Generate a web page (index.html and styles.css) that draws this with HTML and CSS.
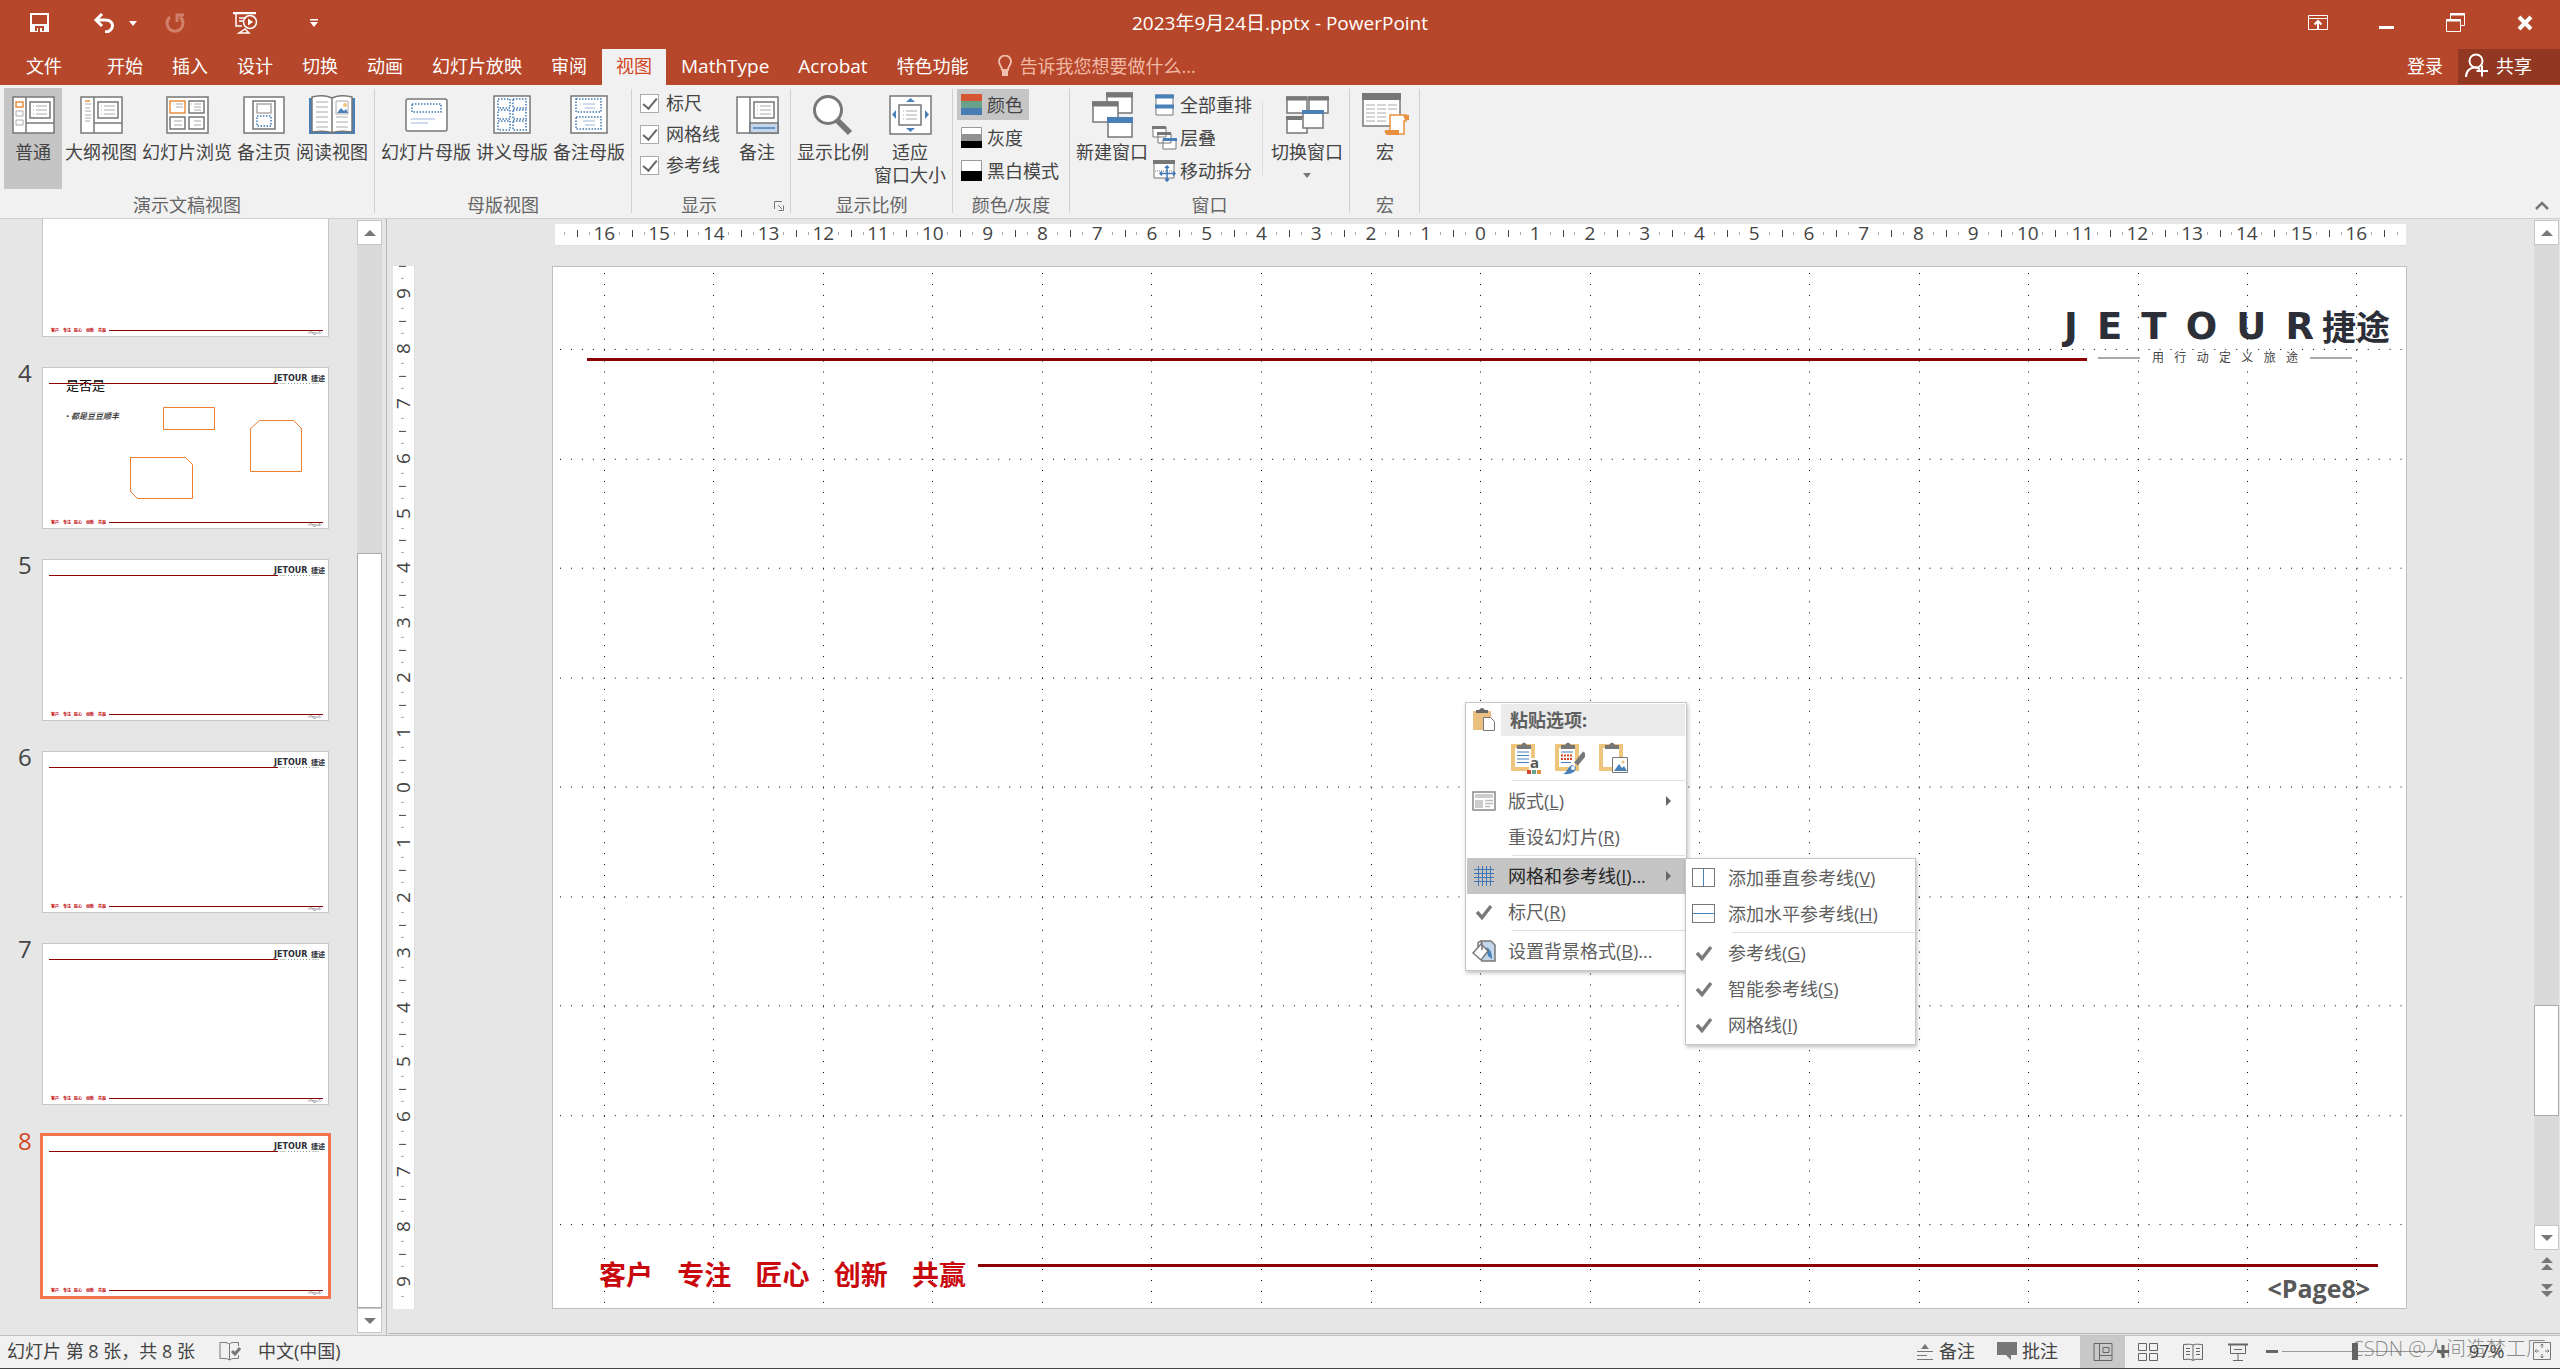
FILE: index.html
```html
<!DOCTYPE html>
<html lang="zh-CN">
<head>
<meta charset="utf-8">
<title>2023年9月24日.pptx - PowerPoint</title>
<link rel="stylesheet" href="styles.css">
</head>
<body>
<svg class="defs" aria-hidden="true">
  <symbol id="mini" viewBox="0 0 287 162">
    <path d="M7 16.5H236M67 155.5H281" stroke="#8b0000" stroke-width="1.2"/>
    <path d="M238 16.500h6M270 16.500h7" stroke="#ccc"/>
    <path d="M246 16.500h22" stroke="#999" stroke-dasharray="1 2"/>
  </symbol>
  <symbol id="check" viewBox="0 0 24 24"><path d="M5 12l5 5.500L19 6" fill="none" stroke="#7a7a7a" stroke-width="3.400"/></symbol>
  <symbol id="up" viewBox="0 0 12 8"><path d="M0 7L6 1l6 6z" fill="#777"/></symbol>
  <symbol id="down" viewBox="0 0 12 8"><path d="M0 1l6 6 6-6z" fill="#777"/></symbol>
  <symbol id="right" viewBox="0 0 6 12"><path d="M0 1v10l5-5z" fill="#666"/></symbol>
</svg>

<div class="app">
  <header class="top">
    <div class="titlebar">
      <div class="qat">
        <button class="q-save" aria-label="保存"><svg width="20" height="20" fill="none" stroke="#fff" stroke-width="2"><path d="M1 1h17v17H1z"/><path d="M1 11h17v7H1z" fill="#fff" stroke="none"/><path d="M6 18v-4h7v4" stroke="#b7472a"/><path d="M9 15v4" stroke="#b7472a"/></svg></button>
        <button class="q-undo" aria-label="撤消"><svg width="22" height="20" fill="none" stroke="#fff" stroke-width="3"><path d="M9 1L3 7l6 6M3 7h9c11 0 9 12 0 12"/></svg></button>
        <button class="q-drop" aria-label="撤消列表"><svg width="8" height="5"><path d="M0 0h8L4 5z" fill="#fff"/></svg></button>
        <button class="q-redo" aria-label="重复"><svg width="20" height="20" fill="none" stroke="#d0806b" stroke-width="3"><path d="M5 4a8 8 0 1 0 10 0M19 2h-7v7"/></svg></button>
        <button class="q-show" aria-label="从头开始"><svg width="25" height="22" fill="none" stroke="#fff" stroke-width="1.500"><path d="M0 1h23" stroke-width="2.500"/><path d="M3 2v12h6M6 6h7M6 9h4M12 17l-6 4h10z"/><circle cx="17" cy="10" r="6.500"/><path d="M15 6.500l5 3.500-5 3.500z" fill="#fff" stroke="none"/></svg></button>
        <button class="q-more" aria-label="自定义快速访问工具栏"><svg width="8" height="8"><path d="M0 0h8v1.500H0zM0 3h8L4 8z" fill="#fff"/></svg></button>
      </div>
      <h1>2023年9月24日.pptx - PowerPoint</h1>
      <div class="winctl">
        <button aria-label="功能区显示选项"><svg width="20" height="16" fill="none" stroke="#fff"><path d="M.5.500h19v14H.5zM.5 3.500h19"/><path d="M10 14V6M6.500 9.500L10 6l3.500 3.500" stroke-width="2"/></svg></button>
        <button aria-label="最小化"><svg width="16" height="16"><path d="M0 11h15v3H0z" fill="#fff"/></svg></button>
        <button aria-label="还原"><svg width="20" height="20" fill="none" stroke="#fff"><path d="M4.500 6V.5h14v12H15M.5 6.500h14v12H.5z"/><path d="M4 1.500h15M0 7.500h15" stroke-width="2"/></svg></button>
        <button aria-label="关闭"><svg width="16" height="16"><path d="M2 2l12 12M14 2L2 14" stroke="#fff" stroke-width="4"/></svg></button>
      </div>
    </div>
    <nav class="tabs">
      <button class="file">文件</button>
      <button>开始</button><button>插入</button><button>设计</button><button>切换</button><button>动画</button><button>幻灯片放映</button><button>审阅</button><button class="on">视图</button><button class="latin-tab">MathType</button><button class="latin-tab">Acrobat</button><button>特色功能</button>
      <label class="tell"><svg width="14" height="22" fill="none" stroke="#f0bfae" stroke-width="1.800"><path d="M4 15c0-4-3-5-3-8.500a6 6 0 0 1 12 0C13 10 10 11 10 15z"/><path d="M4 16h6v5H4z" fill="#f0bfae" stroke="none"/></svg><input type="text" placeholder="告诉我您想要做什么..." aria-label="告诉我您想要做什么"></label>
      <a class="login" href="#">登录</a>
      <button class="share"><svg width="24" height="25" fill="none" stroke="#fff" stroke-width="2"><circle cx="11" cy="8" r="6.500"/><path d="M1 24c0-6 4-9.500 9-9.500 3 0 4 1 5 2M17 12.500v11M11.500 18H23"/></svg>共享</button>
    </nav>
  </header>

  <section class="ribbon">
    <div class="group">
      <div class="row">
        <button class="big on"><span class="ic"><svg width="43" height="38" fill="#fff" stroke="#777"><path d="M1 1h41v36H1z" stroke-width="1.500"/><path d="M14 1v36M14 27h28M18 6h20v16H18z" stroke-width="1.500"/><path d="M4 6h7v5H4z" stroke="#e8903f" stroke-width="1.500"/><path d="M4 15h7v5H4zM4 24h7v5H4zM24 10h11M24 14h11M24 18h11M21 10h1M21 14h1M21 18h1" stroke="#aaa"/></svg></span>普通</button>
        <button class="big"><span class="ic"><svg width="43" height="38" fill="#fff" stroke="#777" stroke-width="1.500"><path d="M1 1h41v36H1zM14 1v36M14 27h28M18 6h20v16H18z"/><path d="M5 5h5" stroke="#e8903f"/><path d="M5 8h6M5 12h5M5 15h6M5 19h6M5 22h6M5 25h5M24 10h11M24 14h11M24 18h11M21 10h1M21 14h1M21 18h1" stroke="#aaa" stroke-width="1"/></svg></span>大纲视图</button>
        <button class="big"><span class="ic"><svg width="43" height="38" fill="#fff" stroke="#777" stroke-width="1.500"><path d="M1 1h41v36H1zM23 5h15v12H23zM4 21h15v12H4zM23 21h15v12H23z"/><path d="M4 5h15v12H4z" stroke="#e8903f"/><path d="M10 8h7M10 11h7M28 8h7M28 11h7M28 14h7M8 25h8M8 29h8M28 25h7M28 29h7M7 8h1M25 8h1" stroke="#aaa" stroke-width="1"/></svg></span>幻灯片浏览</button>
        <button class="big"><span class="ic"><svg width="42" height="38" fill="#fff" stroke="#777" stroke-width="1.500"><path d="M1 1h40v36H1zM10 5h22v28H10z"/><path d="M14 8h14v9H14z" stroke="#aaa"/><path d="M14 20h14v10H14z" stroke="#3f78b5" stroke-dasharray="1.500 1.500"/></svg></span>备注页</button>
        <button class="big"><span class="ic"><svg width="46" height="40" fill="#fff" stroke="#777"><path d="M0 3h46v36H0z" fill="#4a80b8" stroke="none"/><path d="M3 2c8-2 16-1 20 1 4-2 12-3 20-1v35c-8-1-16-1-20 1-4-2-12-2-20-1zM23 3v35" stroke-width="1.500"/><path d="M7 7h12M7 12h12M7 17h12M7 22h12M7 27h12M7 32h12M27 22h12M27 27h12M27 32h12" stroke="#aaa"/><path d="M27 6h12v13H27z" stroke="#aaa"/><path d="M28 18l4-5 3 3 2-2 2 4z" fill="#4a80b8" stroke="none"/><circle cx="36" cy="10" r="2" fill="#f3c57c" stroke="none"/></svg></span>阅读视图</button>
      </div>
      <h2>演示文稿视图</h2>
    </div>
    <div class="group">
      <div class="row">
        <button class="big"><span class="ic"><svg width="43" height="34" fill="#fff" stroke="#777" stroke-width="1.500"><rect x="1" y="1" width="41" height="32" rx="2"/><path d="M7 6h29v8H7z" stroke="#3f78b5" stroke-dasharray="1.500 1.500"/><path d="M6 21h24M6 25h17" stroke="#9db8dc" stroke-width="1"/></svg></span>幻灯片母版</button>
        <button class="big"><span class="ic"><svg width="38" height="39" fill="#fff" stroke="#777" stroke-width="1.500"><path d="M1 1h36v37H1z"/><path d="M5 4h12v9H5zM20 4h13v9H20zM5 15h12v9H5zM20 15h13v9H20zM5 26h12v9H5zM20 26h13v9H20z" stroke="#3f78b5" stroke-dasharray="1.500 1.500"/></svg></span>讲义母版</button>
        <button class="big"><span class="ic"><svg width="38" height="39" fill="#fff" stroke="#777" stroke-width="1.500"><path d="M1 1h36v37H1z"/><path d="M6 4h25v13H6zM6 22h25v12H6z" stroke="#3f78b5" stroke-dasharray="1.500 1.500"/><path d="M13 9h12M15 13h10M13 26h12M15 30h10M10 9h1" stroke="#9db8dc" stroke-width="1"/></svg></span>备注母版</button>
      </div>
      <h2>母版视图</h2>
    </div>
    <div class="group show">
      <div class="row">
        <div class="checks">
          <label><input type="checkbox" checked>标尺</label>
          <label><input type="checkbox" checked>网格线</label>
          <label><input type="checkbox" checked>参考线</label>
        </div>
        <button class="big"><span class="ic"><svg width="43" height="38" fill="#fff" stroke="#777" stroke-width="1.500"><path d="M1 1h41v36H1zM14 1v36M18 6h20v16H18z"/><path d="M14 27h28v10H14z" fill="#c3d6ea"/><path d="M17 32h22" stroke="#4a80b8"/><path d="M24 10h11M24 14h11M24 18h11M21 10h1M21 14h1M21 18h1" stroke="#aaa" stroke-width="1"/></svg></span>备注</button>
      </div>
      <h2>显示</h2>
      <button class="launch" aria-label="网格设置"><svg width="10" height="10" fill="none" stroke="#777"><path d="M.5 8V.5H8M4 4l4 4M9.500 4.500v5h-5"/></svg></button>
    </div>
    <div class="group">
      <div class="row">
        <button class="big"><span class="ic"><svg width="42" height="42" fill="#fff" stroke="#777"><path d="M24 25l14 14" stroke-width="6"/><circle cx="16" cy="16" r="13.500" stroke-width="3"/></svg></span>显示比例</button>
        <button class="big"><span class="ic"><svg width="43" height="40" fill="#fff" stroke="#777" stroke-width="1.500"><path d="M1 1h41v38H1zM10 10h22v20H10z"/><path d="M17 7h9l-4.500-4zM17 33h9l-4.500 4zM7 15v9l-4-4.500zM36 15v9l4-4.500z" fill="#4a80b8" stroke="none"/><path d="M17 16h11M17 20h11M17 24h11M14 16h1M14 20h1M14 24h1" stroke="#aaa" stroke-width="1"/></svg></span>适应<br>窗口大小</button>
      </div>
      <h2>显示比例</h2>
    </div>
    <div class="group">
      <div class="row">
        <div class="smalls">
          <button class="on"><svg width="21" height="21"><path d="M0 0h21v7H0z" fill="#d65532"/><path d="M0 7h21v7H0z" fill="#69a18b"/><path d="M0 14h21v7H0z" fill="#4a7cb4"/></svg>颜色</button>
          <button><svg width="21" height="21"><path d="M.5.500h20v20H.5z" fill="#fff" stroke="#999"/><path d="M0 7h21v7H0z" fill="#929292"/><path d="M0 14h21v7H0z"/></svg>灰度</button>
          <button><svg width="21" height="21"><path d="M.5.500h20v20H.5z" fill="#fff" stroke="#999"/><path d="M0 11h21v10H0z"/></svg>黑白模式</button>
        </div>
      </div>
      <h2>颜色/灰度</h2>
    </div>
    <div class="group">
      <div class="row">
        <button class="big"><span class="ic"><svg width="41" height="46" fill="#fff" stroke="#777" stroke-width="1.500"><path d="M15 1h25v20H15z"/><path d="M14 3h27" stroke-width="5"/><path d="M1 10h25v20H1z"/><path d="M0 12h26" stroke-width="5"/><path d="M16 26h24v19H16z"/><path d="M15 28h26" stroke="#4a80b8" stroke-width="6"/></svg></span>新建窗口</button>
        <div class="smalls tight">
          <button><svg width="26" height="22" fill="#fff" stroke="#777"><path d="M4 1h17v20H4z"/><path d="M3 2.500h19M3 12.500h19" stroke="#4a80b8" stroke-width="4"/></svg>全部重排</button>
          <button><svg width="26" height="24" fill="#fff" stroke="#777"><path d="M1 1h13v10H1zM6 7h13v10H6zM11 13h13v10H11z"/><path d="M0 1.500h14M5 7.500h14" stroke-width="3"/><path d="M11 13.500h14" stroke="#4a80b8" stroke-width="3"/></svg>层叠</button>
          <button><svg width="26" height="22" fill="#fff" stroke="#777"><path d="M2 1h20v17H2z"/><path d="M1 2h22" stroke-width="4"/><path d="M3 11h18" stroke-dasharray="1 1"/><path d="M15 6v15M8 13.500h15M13 8l2-2 2 2M13 19l2 2 2-2M10 11.500l-2 2 2 2M21 11.500l2 2-2 2" stroke="#3f78b5" stroke-width="1.500"/></svg>移动拆分</button>
        </div>
        <span class="vsep"></span>
        <button class="big"><span class="ic"><svg width="43" height="38" fill="#fff" stroke="#777" stroke-width="1.500"><path d="M1 1h20v16H1zM23 1h19v16H23zM1 21h20v16H1z"/><path d="M0 2.500h21M22 2.500h21M0 22h16" stroke-width="4"/><path d="M17 15h20v17H17z"/><path d="M16 16h22" stroke="#4a80b8" stroke-width="4"/></svg></span>切换窗口<svg class="arrow" width="8" height="5"><path d="M0 0h8L4 5z" fill="#777"/></svg></button>
      </div>
      <h2>窗口</h2>
    </div>
    <div class="group macro">
      <div class="row">
        <button class="big"><span class="ic"><svg width="47" height="43" fill="#fff" stroke="#777" stroke-width="1.500"><path d="M1 1h37v32H1z"/><path d="M0 3.500h39" stroke-width="7"/><path d="M4 12h9M15 12h9M26 12h9M4 16h9M15 16h9M26 16h9M4 20h9M15 20h9M4 24h9M15 24h9M4 28h9M15 28h9" stroke="#aaa" stroke-width="1"/><path d="M28 37V22h16v6h-2v13H27z" stroke="#e8903f"/><path d="M23 37h14v5H25q-3-2-2-5zM41 22h6v5h-4z" fill="#e8903f" stroke="none"/></svg></span>宏</button>
      </div>
      <h2>宏</h2>
    </div>
    <button class="collapse" aria-label="折叠功能区"><svg width="14" height="10"><path d="M1 8l6-6 6 6" fill="none" stroke="#777" stroke-width="2.500"/></svg></button>
  </section>

  <main class="main">
    <aside class="panel">
      <ol class="thumbs">
        <li><svg class="thumb" viewBox="0 0 287 162"><use href="#mini"/><g class="tiny"><text x="9" y="157">客户</text><text x="21" y="157">专注</text><text x="32" y="157">匠心</text><text x="44" y="157">创新</text><text x="56" y="157">共赢</text></g><text class="num" x="265" y="159">&lt;Page3&gt;</text></svg></li>
        <li><span>4</span><svg class="thumb" viewBox="0 0 287 162"><text x="24" y="23" font-size="13" fill="#000">是否是</text><text x="24" y="52" font-size="8" font-weight="500" font-style="italic" fill="#222">• 都是豆豆顺丰</text><use href="#mini"/><g fill="none" stroke="#ed7d31"><path d="M121.500 40.500h51v22h-51zM88.500 90.500h55l7 7v34h-55l-7-7zM208.500 61.500l9-8h34l8 8v43h-51z"/></g><text class="brand" x="232" y="14">JETOUR</text><text class="brand-cn" x="269" y="14">捷途</text><g class="tiny"><text x="9" y="157">客户</text><text x="21" y="157">专注</text><text x="32" y="157">匠心</text><text x="44" y="157">创新</text><text x="56" y="157">共赢</text></g><text class="num" x="265" y="159">&lt;Page4&gt;</text></svg></li>
        <li><span>5</span><svg class="thumb" viewBox="0 0 287 162"><use href="#mini"/><text class="brand" x="232" y="14">JETOUR</text><text class="brand-cn" x="269" y="14">捷途</text><g class="tiny"><text x="9" y="157">客户</text><text x="21" y="157">专注</text><text x="32" y="157">匠心</text><text x="44" y="157">创新</text><text x="56" y="157">共赢</text></g><text class="num" x="265" y="159">&lt;Page5&gt;</text></svg></li>
        <li><span>6</span><svg class="thumb" viewBox="0 0 287 162"><use href="#mini"/><text class="brand" x="232" y="14">JETOUR</text><text class="brand-cn" x="269" y="14">捷途</text><g class="tiny"><text x="9" y="157">客户</text><text x="21" y="157">专注</text><text x="32" y="157">匠心</text><text x="44" y="157">创新</text><text x="56" y="157">共赢</text></g><text class="num" x="265" y="159">&lt;Page6&gt;</text></svg></li>
        <li><span>7</span><svg class="thumb" viewBox="0 0 287 162"><use href="#mini"/><text class="brand" x="232" y="14">JETOUR</text><text class="brand-cn" x="269" y="14">捷途</text><g class="tiny"><text x="9" y="157">客户</text><text x="21" y="157">专注</text><text x="32" y="157">匠心</text><text x="44" y="157">创新</text><text x="56" y="157">共赢</text></g><text class="num" x="265" y="159">&lt;Page7&gt;</text></svg></li>
        <li class="on"><span>8</span><svg class="thumb" viewBox="0 0 287 162"><use href="#mini"/><text class="brand" x="232" y="14">JETOUR</text><text class="brand-cn" x="269" y="14">捷途</text><g class="tiny"><text x="9" y="157">客户</text><text x="21" y="157">专注</text><text x="32" y="157">匠心</text><text x="44" y="157">创新</text><text x="56" y="157">共赢</text></g><text class="num" x="265" y="159">&lt;Page8&gt;</text></svg></li>
      </ol>
      <div class="scroll left">
        <button aria-label="向上"><svg width="12" height="8"><use href="#up"/></svg></button>
        <div class="track"><i class="gap"></i><i class="bar"></i></div>
        <button aria-label="向下"><svg width="12" height="8"><use href="#down"/></svg></button>
      </div>
    </aside>

    <section class="work">
      <ol class="hruler"><li>16</li><li>15</li><li>14</li><li>13</li><li>12</li><li>11</li><li>10</li><li>9</li><li>8</li><li>7</li><li>6</li><li>5</li><li>4</li><li>3</li><li>2</li><li>1</li><li>0</li><li>1</li><li>2</li><li>3</li><li>4</li><li>5</li><li>6</li><li>7</li><li>8</li><li>9</li><li>10</li><li>11</li><li>12</li><li>13</li><li>14</li><li>15</li><li>16</li></ol>
      <ol class="vruler"><li>9</li><li>8</li><li>7</li><li>6</li><li>5</li><li>4</li><li>3</li><li>2</li><li>1</li><li>0</li><li>1</li><li>2</li><li>3</li><li>4</li><li>5</li><li>6</li><li>7</li><li>8</li><li>9</li></ol>
      <article class="slide">
        <div class="logo">
          <span class="latin"><span>J</span><span>E</span><span>T</span><span>O</span><span>U</span><span>R</span></span>
          <span class="han">捷途</span>
        </div>
        <div class="headline">
          <hr class="rule">
          <div class="slogan"><i></i><p>用 行 动 定 义 旅 途</p><i></i></div>
        </div>
        <footer class="foot">
          <p class="words"><span>客户</span> <span>专注</span> <span>匠心</span> <span>创新</span> <span>共赢</span></p>
          <div class="footright"><hr class="rule"><p class="page">&lt;Page8&gt;</p></div>
        </footer>
        <svg class="grid" viewBox="0 0 1855 1044" preserveAspectRatio="none" shape-rendering="crispEdges" fill="none" stroke="#000">
          <path stroke-dasharray="1 9.956" d="M52.500 7V1040M161.500 7V1040M271.500 7V1040M380.500 7V1040M490.500 7V1040M599.500 7V1040M709.500 7V1040M819.500 7V1040M928.500 7V1040M1038.500 7V1040M1147.500 7V1040M1257.500 7V1040M1367.500 7V1040M1476.500 7V1040M1586.500 7V1040M1695.500 7V1040M1804.500 7V1040"/>
          <path stroke-dasharray="1 9.956" d="M8 83.500H1852M8 193.500H1852M8 302.500H1852M8 412.500H1852M8 521.500H1852M8 631.500H1852M8 740.500H1852M8 850.500H1852M8 959.500H1852"/>
        </svg>
      </article>
      <div class="scroll right">
        <button aria-label="向上"><svg width="12" height="8"><use href="#up"/></svg></button>
        <div class="track"><i class="gap"></i><i class="bar"></i><i class="rest"></i></div>
        <button aria-label="向下"><svg width="12" height="8"><use href="#down"/></svg></button>
        <button class="jump" aria-label="上一张幻灯片"><svg width="12" height="14"><path d="M0 6h12L6 0zM0 13h12L6 7z" fill="#777"/></svg></button>
        <button class="jump" aria-label="下一张幻灯片"><svg width="12" height="14"><path d="M0 0h12L6 6zM0 7h12l-6 6z" fill="#777"/></svg></button>
      </div>
      <div class="baseline"></div>
    </section>
  </main>

  <footer class="status">
    <span class="count">幻灯片 第 8 张，共 8 张</span>
    <button aria-label="拼写检查"><svg width="22" height="20" fill="none" stroke="#777"><path d="M10.500 3C8 1 4 1.500 1 1.500v16c3 0 7-.5 9.500 1.500V3C12 1 16 1.500 19.500 1.500V5M10.500 19c2-2 6-1.500 9-1.500V14"/><path d="M13 10l3 3 5-6" stroke-width="3"/></svg></button>
    <span class="lang">中文(中国)</span>
    <button class="s-note"><svg width="18" height="18"><path d="M5 7l4-5 4 5z" fill="#777"/><path d="M1 9.500h16M1 13.500h10M1 17.500h16" stroke="#777"/></svg>备注</button>
    <button class="s-comment"><svg width="20" height="20"><path d="M0 1h20v13h-6v5l-5-5H0z" fill="#777"/></svg>批注</button>
    <div class="views">
      <button class="on" aria-label="普通"><svg width="20" height="19" fill="none" stroke="#666"><path d="M1 .5h18v17H1zM6.500.500v17M6.500 12.500H19M10 4.500h6v5h-6z"/></svg></button>
      <button aria-label="幻灯片浏览"><svg width="20" height="19" fill="none" stroke="#666"><path d="M.5.500h8v7h-8zM11.500.500h8v7h-8zM.5 10.500h8v7h-8zM11.500 10.500h8v7h-8z"/></svg></button>
      <button aria-label="阅读视图"><svg width="20" height="19" fill="none" stroke="#666"><path d="M10 2C7 .5 4 1.500.500 1.500v15c3 0 7-1 9.500 1 2.500-2 6-1 9.500-1v-15C16 1.500 13 .5 10 2v15M3 5.500h4M3 8.500h4M3 11.500h4M13 5.500h4M13 8.500h4M13 11.500h4"/></svg></button>
      <button aria-label="幻灯片放映"><svg width="20" height="19" fill="none" stroke="#666"><path d="M0 1.500h20" stroke-width="2"/><path d="M2.500 2v8.500h15V2M6 6.500h8M10 11v7M5 17.500h10"/></svg></button>
    </div>
    <button class="z-out" aria-label="缩小"><svg width="12" height="18"><path d="M0 8h12v3H0z" fill="#666"/></svg></button>
    <input class="zoom" type="range" min="10" max="200" value="103" aria-label="显示比例">
    <button class="z-in" aria-label="放大"><svg width="12" height="18"><path d="M0 9.500h12M6 3v13" stroke="#666" stroke-width="3"/></svg></button>
    <span class="pct">97%</span>
    <button aria-label="使幻灯片适应当前窗口"><svg width="18" height="18" fill="none" stroke="#777"><path d="M.5.500h17v17H.5zM9 2v4M9 12v4M2 9h4M12 9h4M7.500 3.500L9 2l1.500 1.500M7.500 14.500L9 16l1.500-1.500M3.500 7.500L2 9l1.500 1.500M14.500 7.500L16 9l-1.500 1.500"/></svg></button>
  </footer>

  <ul class="menu ctx">
    <li class="head"><span class="mi"><svg width="22" height="24"><path d="M0 3h18v19H0z" fill="#e9c07f"/><path d="M3 5V2h3q3-4 6 0h3v3z" fill="#666"/><path d="M10.500 9.500h7l4 4v9h-11z" fill="#fff" stroke="#777"/></svg></span><b>粘贴选项:</b></li>
    <li class="paste">
      <button aria-label="使用目标主题"><svg width="30" height="34"><path d="M2 5h20v23H2z" fill="#fff" stroke="#edc57c" stroke-width="4"/><path d="M6 8V4h4q3-5 6 0h4v4z" fill="#777"/><path d="M6 11h12M6 14.500h12M6 18h12M6 21.500h12" stroke="#4a80b8"/><path d="M18 17h12v16H18z" fill="#fff"/><path d="M16 29h4v4h-4z" fill="#d24726"/><path d="M21 29h4v4h-4z" fill="#69a18b"/><path d="M26 29h4v4h-4z" fill="#e8903f"/><text x="19" y="27" font-size="15" font-weight="700" fill="#555">a</text></svg></button>
      <button aria-label="保留源格式"><svg width="30" height="34"><path d="M2 5h20v23H2z" fill="#fff" stroke="#edc57c" stroke-width="4"/><path d="M6 8V4h4q3-5 6 0h4v4z" fill="#777"/><path d="M6 11h12M6 21.500h10" stroke="#4a80b8"/><path d="M6 14.500h12M6 18h12" stroke="#d24726" stroke-width="2" stroke-dasharray="2 1"/><path d="M30 12l-9 11" stroke="#777" stroke-width="5"/><path d="M8 33c4-1 5-8 9-9l4 2c0 4-3 8-13 7z" fill="#4a80b8"/><circle cx="18" cy="27" r="2" fill="#fff"/></svg></button>
      <button aria-label="图片"><svg width="30" height="34"><path d="M2 5h20v23H2z" fill="#fff" stroke="#edc57c" stroke-width="4"/><path d="M6 8V4h4q3-5 6 0h4v4z" fill="#777"/><path d="M13.500 16.500h15v15h-15z" fill="#fff" stroke="#777"/><path d="M15 30l5-7 3 4 2-2 3 5z" fill="#4a80b8"/><circle cx="24" cy="21" r="1.500" fill="#e9c07f"/></svg></button>
    </li>
    <li class="sep"></li>
    <li class="item"><span class="mi"><svg width="24" height="20" fill="#fff" stroke="#888" stroke-width="1.500"><path d="M1 1h22v18H1z"/><path d="M3 3h18v4H3zM3 9h8v8H3z" fill="#ccc" stroke="none"/><path d="M13 9.500h8M13 12.500h8M13 15.500h5" stroke="#bbb"/></svg></span>版式(<u>L</u>)<svg class="sub" width="6" height="12"><use href="#right"/></svg></li>
    <li class="item"><span class="mi"></span>重设幻灯片(<u>R</u>)</li>
    <li class="sep"></li>
    <li class="item on"><span class="mi"><svg width="20" height="20" stroke="#3f78b5"><path d="M4.500 0v20M8.500 0v20M12.500 0v20M16.500 0v20M0 3.500h20M0 7.500h20M0 11.500h20M0 15.500h20"/></svg></span>网格和参考线(<u>I</u>)...<svg class="sub" width="6" height="12"><use href="#right"/></svg></li>
    <li class="item"><span class="mi"><svg width="24" height="24"><use href="#check"/></svg></span>标尺(<u>R</u>)</li>
    <li class="sep"></li>
    <li class="item"><span class="mi"><svg width="24" height="24" fill="#fff" stroke="#777"><path d="M8 2h11l4 4v16H9" fill="#c3d6ea" stroke-width="1.500"/><path d="M14 8q6 2 6 12l-4-3z" fill="#4a80b8" stroke="none"/><path d="M1 14L9 5l7 7-7 9zM6 8V4q2-3 4 0v7" stroke-width="1.500"/></svg></span>设置背景格式(<u>B</u>)...</li>
  </ul>
  <ul class="menu submenu">
    <li class="item"><span class="mi"><svg width="24" height="20" fill="none" stroke="#777" shape-rendering="crispEdges"><path d="M.5.500h22v18H.5z"/><path d="M11.500 1v17" stroke="#4a80b8"/></svg></span>添加垂直参考线(<u>V</u>)</li>
    <li class="item"><span class="mi"><svg width="24" height="20" fill="none" stroke="#777" shape-rendering="crispEdges"><path d="M.5.500h22v18H.5z"/><path d="M1 9.500h21" stroke="#4a80b8"/></svg></span>添加水平参考线(<u>H</u>)</li>
    <li class="sep"></li>
    <li class="item"><span class="mi"><svg width="24" height="24"><use href="#check"/></svg></span>参考线(<u>G</u>)</li>
    <li class="item"><span class="mi"><svg width="24" height="24"><use href="#check"/></svg></span>智能参考线(<u>S</u>)</li>
    <li class="item"><span class="mi"><svg width="24" height="24"><use href="#check"/></svg></span>网格线(<u>I</u>)</li>
  </ul>
  <div class="watermark">CSDN @人间造梦工厂</div>
</div>
</body>
</html>
```
FILE: styles.css
```css
* { box-sizing: border-box; }
body, h1, h2, p, ul, ol, hr { margin: 0; padding: 0; border: 0; }
ul, ol { list-style: none; }
body {
  font: 18px/24px "Open Sans", "Noto Sans CJK SC", sans-serif;
  color: #444;
  background: #e6e6e6;
}
button, input { font: inherit; color: inherit; border: 0; background: none; padding: 0; margin: 0; }
button { display: flex; align-items: center; justify-content: center; white-space: nowrap; }
svg { display: block; flex: none; }
.defs { position: absolute; width: 0; height: 0; }
.app { position: relative; min-height: 100vh; display: flex; flex-direction: column; overflow: hidden; }

/* title bar and tabs */
.top { background: #b7472a; color: #fff; }
.titlebar { height: 49px; display: grid; grid-template-columns: 1fr auto 1fr; align-items: center; padding-bottom: 3px; }
.titlebar h1 { font-size: 19px; font-weight: 400; line-height: 24px; }
.qat { display: flex; align-items: center; padding-left: 30px; }
.q-undo { margin-left: 43px; }
.q-drop { margin-left: 14px; }
.q-redo { margin-left: 28px; }
.q-show { margin-left: 48px; }
.q-more { margin-left: 52px; }
.winctl { display: flex; justify-content: flex-end; gap: 51px; padding-right: 27px; }
.tabs { display: flex; height: 36px; gap: 1px; }
.tabs button { padding: 0 14px 3px; }
.tabs .latin-tab { font-size: 19px; }
.tabs .file { margin: 0 16px 0 12px; }
.tabs .on { background: #f1f1f1; color: #d24726; }
.tell { display: flex; align-items: center; gap: 8px; margin-left: 14px; flex: 1; padding-bottom: 2px; }
.tell input { width: 220px; }
.tell input::placeholder { color: #f0b9a6; opacity: 1; }
.login { color: #fff; text-decoration: none; line-height: 34px; margin-right: 14px; }
.tabs .share { background: #923822; padding: 0 28px 2px 7px; gap: 7px; margin-bottom: 1px; }

/* ribbon */
.ribbon { position: relative; display: flex; background: #f1f1f1; border-bottom: 1px solid #d0d0d0; padding-top: 3px; }
.group { position: relative; padding: 0 5px 1px 4px; background: linear-gradient(#d0d0d0, #d0d0d0) right 1px / 1px 124px no-repeat; }
.group h2 { font-size: 18px; font-weight: 400; line-height: 24px; text-align: center; color: #666; margin-top: 4px; }
.group.show h2 { padding-right: 24px; }
.row { display: flex; gap: 1px; height: 101px; }
.big { flex-direction: column; justify-content: flex-start; line-height: 23px; padding: 0 2px; min-width: 58px; }
.big.on, .smalls .on { background: #c5c5c5; }
.ic { height: 53px; display: flex; align-items: center; }
.arrow { margin-top: 9px; }
.checks { display: flex; flex-direction: column; gap: 7px; padding: 3px 7px 0 4px; }
.checks label { display: flex; align-items: center; gap: 7px; }
.checks input {
  appearance: none; width: 19px; height: 19px; border: 1px solid #ababab;
  background: #fff;
  display: grid; place-items: center;
}
.checks input:checked::after { content: ""; width: 6px; height: 12px; border: solid #666; border-width: 0 2px 2px 0; transform: rotate(40deg); margin-top: -3px; }
.launch { position: absolute; right: 7px; bottom: 7px; }
.smalls { display: flex; flex-direction: column; gap: 2px; padding-top: 1px; }
.smalls button { height: 31px; gap: 5px; padding: 0 6px 0 4px; align-self: flex-start; }
.smalls.tight button { gap: 2px; padding: 0 6px 0 1px; }
.vsep { width: 1px; background: #ddd; margin: 14px 5px 14px 3px; }
.group.macro { padding: 0 6px; }
.collapse { position: absolute; right: 11px; bottom: 7px; }

/* thumbnails */
.main { flex: 1; display: flex; min-height: 0; }
.panel { width: 387px; flex: none; display: flex; border-right: 1px solid #b5b5b5; padding-right: 4px; }
.thumbs { flex: 1; height: 0; min-height: 100%; overflow: hidden; display: flex; flex-direction: column; justify-content: flex-end; gap: 30px; padding: 0 28px 38px 0; }
.thumbs li { display: grid; grid-template-columns: 42px 1fr; align-items: start; }
.thumbs span { font-size: 24px; line-height: 24px; padding-left: 18px; margin-top: -6px; }
.thumb { grid-column: 2; width: 100%; background: #fff; outline: 1px solid #c6c6c6; outline-offset: -1px; }
.thumbs .on span { color: #d24726; }
.thumbs .on .thumb { outline: 3px solid #f3734f; }
.brand, .brand-cn { font: 700 8px "DejaVu Sans", sans-serif; fill: #2c2f38; }
.brand-cn { font: 700 7px "Noto Sans CJK SC", sans-serif; }
.tiny { font-size: 4px; font-weight: 700; fill: #c00000; }
.num { font-size: 4px; font-style: italic; fill: #555; }

/* scroll bars */
.scroll { width: 25px; display: flex; flex-direction: column; padding-top: 1px; }
.scroll button { height: 25px; background: #fff; border: 1px solid #c6c6c6; flex: none; }
.scroll .jump { background: none; border: 0; height: 27px; }
.track { flex: 1; background: #dadada; display: flex; flex-direction: column; }
.bar { background: #fff; border: 1px solid #ababab; }
.left { padding-bottom: 2px; }
.left .gap { flex: 309; }
.left .bar { flex: 755; }
.right .gap { flex: 762; }
.right .bar, .right .rest { flex: 109; }
.right { grid-area: 1 / 6 / 6 / 7; padding-bottom: 29px; }

/* slide canvas */
.work {
  flex: 1; display: grid;
  grid-template-columns: 6px 22px 137px 1fr 127px 25px 1px;
  grid-template-rows: 5px 22px 20px 1fr 24px 2px;
}
.hruler, .vruler { display: flex; background: #fff; border: 1px solid #ddd; border-width: 0 0 1px; font-size: 19px; line-height: 18px; }
.hruler li, .vruler li { flex: 1; display: flex; justify-content: center; background-repeat: no-repeat; }
.hruler { grid-area: 2 / 4; margin: 0 1px 0 3px; padding: 0 22px; position: relative; }
.hruler li {
  background-image: linear-gradient(#444, #444), linear-gradient(#aaa, #aaa), linear-gradient(#aaa, #aaa);
  background-size: 1px 7px, 1px 3px, 1px 3px;
  background-position: 0 6px, 22% 8px, 78% 8px;
}
.hruler::before, .hruler::after { content: ""; position: absolute; top: 8px; left: 9px; width: 1px; height: 3px; background: #aaa; }
.hruler::after { left: auto; right: 8px; height: 7px; top: 6px; width: 14px; background: linear-gradient(#444, #444) left / 1px 7px no-repeat, linear-gradient(#aaa, #aaa) right / 1px 3px no-repeat; }
.vruler { grid-area: 4 / 2; flex-direction: column; border-width: 0 1px 0 0; padding-right: 1px; }
.vruler li {
  writing-mode: vertical-rl; transform: rotate(180deg); align-items: center; line-height: 18px;
  background-image: linear-gradient(#444, #444), linear-gradient(#aaa, #aaa), linear-gradient(#aaa, #aaa);
  background-size: 7px 1px, 3px 1px, 3px 1px;
  background-position: 7px 100%, 9px 22%, 9px 78%;
}
.slide { grid-area: 4 / 4; background: #fff; border: 1px solid #c0c0c0; position: relative; display: flex; flex-direction: column; }
.grid { position: absolute; inset: -1px; width: calc(100% + 2px); height: calc(100% + 2px); }
.logo { display: flex; justify-content: flex-end; align-items: center; height: 36px; margin: 42px 16px 0; color: #2c2f38; }
.latin { display: flex; justify-content: space-between; width: 250px; font: 700 37px/36px "DejaVu Sans", sans-serif; }
.han { font-size: 34px; line-height: 36px; font-weight: 700; margin-left: 8px; }
.headline { display: flex; gap: 11px; padding: 0 54px 0 34px; align-items: center; }
.rule { flex: 1; height: 3px; background: #8b0000; margin-top: 3px; }
.slogan { width: 254px; display: flex; align-items: center; justify-content: space-between; }
.slogan i { width: 42px; height: 2px; background: #aaa; }
.slogan p { width: 146px; font-size: 12px; line-height: 26px; text-align-last: justify; }
.foot { margin-top: auto; display: flex; align-items: flex-start; gap: 12px; padding: 0 28px 6px 46px; }
.words { width: 367px; display: flex; justify-content: space-between; font-size: 27px; line-height: 36px; font-weight: 700; color: #c8080c; }
.footright { flex: 1; padding-top: 4px; }
.page { font-size: 25px; line-height: 28px; font-weight: 700; color: #595959; text-align: right; padding-right: 8px; margin-top: 7px; }
.baseline { grid-area: 6 / 1 / 7 / 8; border-top: 1px solid #b5b5b5; margin-left: 2px; }

/* status bar */
.status { height: 34px; display: flex; align-items: center; background: #f1f1f1; border-top: 1px solid #c0c0c0; border-bottom: 1px solid #444; padding: 0 9px 2px 7px; }
.count { width: 212px; white-space: nowrap; }
.lang { margin-left: 17px; margin-right: auto; }
.s-note, .s-comment { gap: 5px; margin-right: 22px; }
.views { display: flex; align-self: stretch; margin-bottom: -2px; }
.views button { width: 45px; }
.views .on { background: #c8c8c8; }
.z-out { margin: 0 4px 0 6px; }
.zoom { appearance: none; width: 150px; height: 18px; background: linear-gradient(#999, #999) center / 100% 1px no-repeat; }
.zoom::-webkit-slider-thumb { appearance: none; width: 6px; height: 17px; background: #666; }
.z-in { margin: 0 20px 0 5px; }
.pct { width: 64px; }

/* context menus */
.menu { position: absolute; background: #fff; border: 1px solid #c6c6c6; box-shadow: 1px 2px 4px rgba(0, 0, 0, .25); color: #606060; }
.ctx { left: 1465px; top: 702px; width: 222px; padding: 1px; }
.submenu { left: 1685px; top: 858px; width: 231px; padding: 1px; }
.item { display: flex; align-items: center; height: 36px; white-space: pre; }
.item.on { background: #c5c5c5; color: #262626; }
.mi { width: 34px; flex: none; display: grid; place-items: center; margin-right: 7px; }
.sub { margin-left: auto; margin-right: 13px; }
.sep { height: 1px; background: #dfdfdf; margin: 0 0 2px 45px; }
.head { display: flex; align-items: center; height: 32px; background: linear-gradient(#ebebeb, #ebebeb) 34px 0 no-repeat; }
.head .mi { margin-right: 9px; }
.paste { display: flex; gap: 14px; height: 44px; padding-left: 44px; }
.watermark { position: absolute; right: 14px; bottom: 7px; font-size: 20px; line-height: 26px; font-weight: 300; color: rgba(90, 90, 90, .7); white-space: nowrap; }
```
